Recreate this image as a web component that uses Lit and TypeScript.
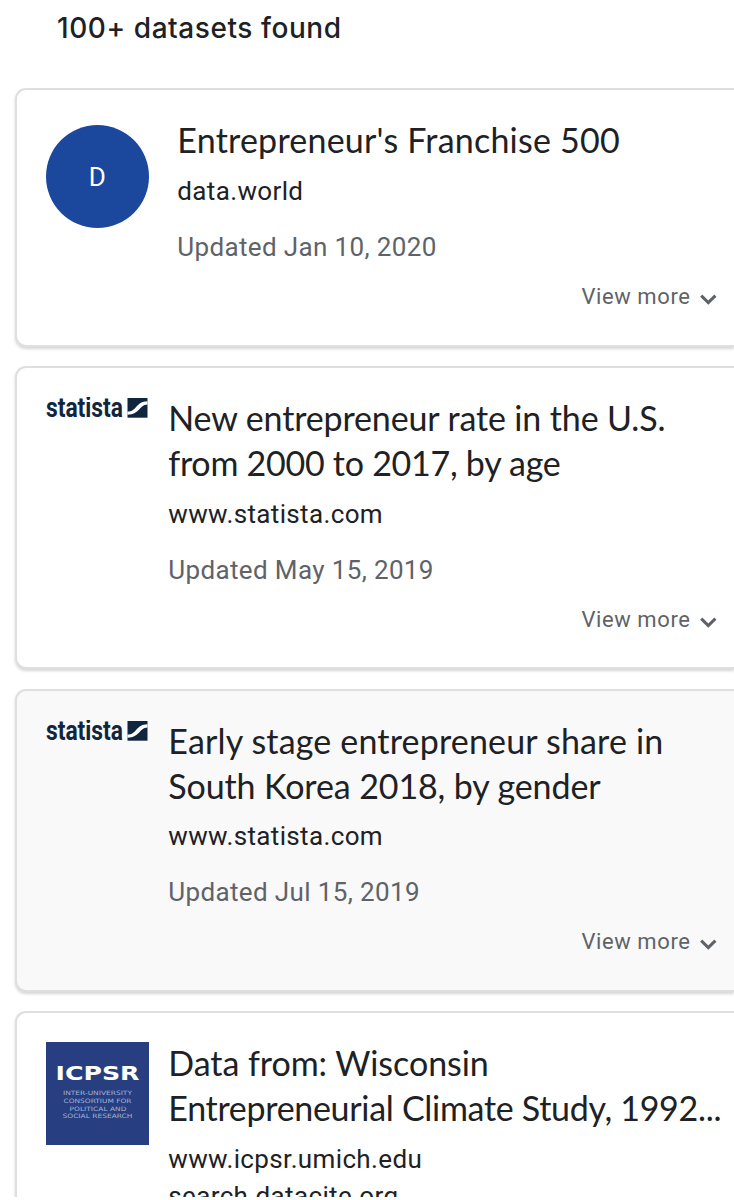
import { LitElement, html, css, svg } from 'lit';
import { customElement, property } from 'lit/decorators.js';
import { classMap } from 'lit/directives/class-map.js';
import { styleMap } from 'lit/directives/style-map.js';

type Logo = 'letter' | 'statista' | 'icpsr';

interface TitleLine {
  text: string;
  tracking: number;
}

interface Dataset {
  logo: Logo;
  title: TitleLine[];
  sources: string[];
  updated?: string;
  visited?: boolean;
}

const DATASETS: Dataset[] = [
  {
    logo: 'letter',
    title: [{ text: "Entrepreneur's Franchise 500", tracking: 0.22 }],
    sources: ['data.world'],
    updated: 'Updated Jan 10, 2020',
  },
  {
    logo: 'statista',
    title: [
      { text: 'New entrepreneur rate in the U.S.', tracking: -0.13 },
      { text: 'from 2000 to 2017, by age', tracking: -0.26 },
    ],
    sources: ['www.statista.com'],
    updated: 'Updated May 15, 2019',
  },
  {
    logo: 'statista',
    title: [
      { text: 'Early stage entrepreneur share in', tracking: 0.17 },
      { text: 'South Korea 2018, by gender', tracking: -0.11 },
    ],
    sources: ['www.statista.com'],
    updated: 'Updated Jul 15, 2019',
    visited: true,
  },
  {
    logo: 'icpsr',
    title: [
      { text: 'Data from: Wisconsin', tracking: -0.05 },
      { text: 'Entrepreneurial Climate Study, 1992...', tracking: -0.3 },
    ],
    sources: ['www.icpsr.umich.edu', 'search.datacite.org'],
  },
];

@customElement('source-logo')
export class SourceLogo extends LitElement {
  @property() kind: Logo = 'letter';

  static styles = css`
    :host { display: block; width: 103px; }
    svg { display: block; }
    .letter {
      box-sizing: border-box;
      width: 103px;
      height: 103px;
      border-radius: 50%;
      background: #1b479d;
      color: #fff;
      display: flex;
      align-items: center;
      justify-content: center;
      padding-right: 1px;
      font: 26px/30px Roboto, sans-serif;
    }
    .word { font: 700 27px Roboto, sans-serif; fill: #10263f; }
    .acronym { font: 700 19px 'DejaVu Sans', sans-serif; fill: #fff; }
    .motto { font: 6px 'DejaVu Sans', sans-serif; fill: #a3b2d6; }
  `;

  render() {
    if (this.kind === 'letter') return html`<div class="letter">D</div>`;
    if (this.kind === 'statista') {
      return html`<svg width="103" height="26" viewBox="0 0 103 26">
        <text class="word" x="0" y="20" textLength="77" lengthAdjust="spacingAndGlyphs">statista</text>
        <rect x="81.5" y="1" width="20" height="19.7" fill="#10263f" />
        <path d="M81.5 14.6C91 14.6 89.5 4.4 101.5 4.2V7.6C93 8 94 17.6 81.5 17.8Z" fill="#fff" />
      </svg>`;
    }
    const motto: [string, number, number, number][] = [
      ['INTER-UNIVERSITY', 17, 53, 69],
      ['CONSORTIUM FOR', 17.5, 60.7, 68],
      ['POLITICAL AND', 23.5, 68.6, 57],
      ['SOCIAL RESEARCH', 16.5, 76.2, 70],
    ];
    return html`<svg width="103" height="103" viewBox="0 0 103 103">
      <rect width="103" height="103" fill="#273f80" />
      <text class="acronym" x="9.5" y="38" textLength="84" lengthAdjust="spacingAndGlyphs">ICPSR</text>
      ${motto.map(
        ([t, x, y, w]) => svg`<text class="motto" x=${x} y=${y} textLength=${w} lengthAdjust="spacingAndGlyphs">${t}</text>`,
      )}
    </svg>`;
  }
}

@customElement('dataset-card')
export class DatasetCard extends LitElement {
  @property({ attribute: false }) data!: Dataset;

  static styles = css`
    :host { display: block; }
    .card {
      box-sizing: border-box;
      border: 2px solid #dfdfe1;
      border-right: 0;
      border-radius: 11px 0 0 11px;
      box-shadow: 0 2px 3px rgba(60, 50, 54, 0.2);
      background: #fff;
      padding: 28px 17.5px 32.5px 29.3px;
    }
    .visited { background: #f9f9f9; }
    .row { display: flex; gap: 19px; }
    .letter-row { gap: 28px; }
    .logo { flex: none; padding-top: 1px; }
    .letter-row .logo { padding-top: 7px; }
    .text { flex: 1; min-width: 0; white-space: nowrap; }
    .title { margin: 0; font: 400 34px/44.8px Lato, sans-serif; color: #202124; }
    .line { display: block; }
    .sources { margin-top: 10px; }
    .source, .updated {
      font: 26px/37px Roboto, sans-serif;
      letter-spacing: 0.36px;
      color: #202124;
    }
    .updated { margin-top: 19px; color: #5f6368; }
    .more {
      margin-top: 16px;
      display: flex;
      justify-content: flex-end;
      align-items: center;
      gap: 9px;
      font: 22px/30px Roboto, sans-serif;
      letter-spacing: 0.59px;
      color: #5f6368;
    }
    .chevron { display: block; margin-top: 5px; }
  `;

  render() {
    const d = this.data;
    return html`<article class=${classMap({ card: true, visited: !!d.visited })}>
      <div class=${classMap({ row: true, 'letter-row': d.logo === 'letter' })}>
        <source-logo class="logo" .kind=${d.logo}></source-logo>
        <div class="text">
          <h3 class="title">
            ${d.title.map(
              (l) => html`<span class="line" style=${styleMap({ letterSpacing: `${l.tracking}px` })}>${l.text}</span>`,
            )}
          </h3>
          <div class="sources">${d.sources.map((s) => html`<div class="source">${s}</div>`)}</div>
          ${d.updated ? html`<div class="updated">${d.updated}</div>` : ''}
        </div>
      </div>
      ${d.updated
        ? html`<div class="more">
            <span>View more</span>
            <svg class="chevron" width="17" height="11" viewBox="0 0 17 11">
              <path d="M1.2 1.6L8.3 8.6L15.4 1.6" fill="none" stroke="#5f6368" stroke-width="3" />
            </svg>
          </div>`
        : ''}
    </article>`;
  }
}

@customElement('app-root')
export class AppRoot extends LitElement {
  static styles = css`
    :host {
      display: block;
      height: 1197px;
      overflow: hidden;
      background: #fff;
    }
    .count {
      margin: 0;
      padding: 10px 0 0 57px;
      height: 78.4px;
      font: 500 28px/36px Inter, sans-serif;
      letter-spacing: 0.57px;
      color: #202124;
    }
    .list {
      display: flex;
      flex-direction: column;
      gap: 19.5px;
      padding-left: 15px;
    }
  `;

  render() {
    return html`<h2 class="count">100+ datasets found</h2>
      <main class="list">${DATASETS.map((d) => html`<dataset-card .data=${d}></dataset-card>`)}</main>`;
  }
}
